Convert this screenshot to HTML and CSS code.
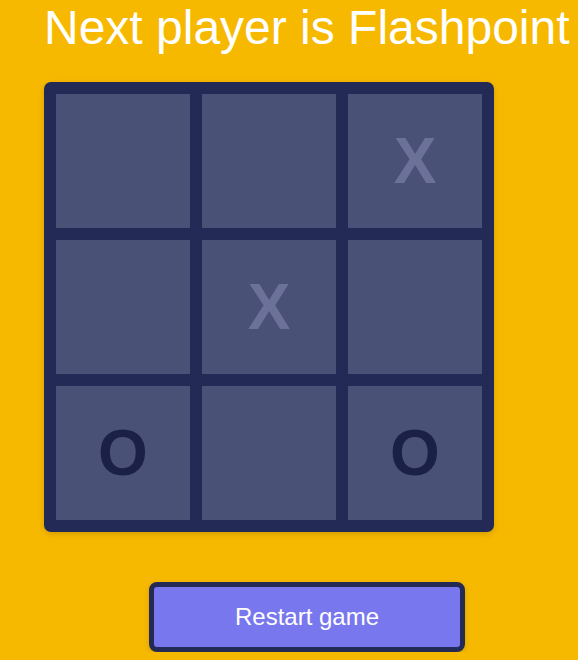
FILE: index.html
```html
<!DOCTYPE html>
<html lang="en">
<head>
<meta charset="utf-8">
<title>Tic Tac Toe</title>
<link rel="stylesheet" href="styles.css">
</head>
<body>
<main class="game">
  <h1 class="status">Next player is Flashpoint</h1>
  <div class="board">
    <button class="cell"></button>
    <button class="cell"></button>
    <button class="cell cell-x">X</button>
    <button class="cell"></button>
    <button class="cell cell-x">X</button>
    <button class="cell"></button>
    <button class="cell cell-o">O</button>
    <button class="cell"></button>
    <button class="cell cell-o">O</button>
  </div>
  <div class="actions">
    <button class="restart">Restart game</button>
  </div>
</main>
</body>
</html>
```
FILE: styles.css
```css
html, body {
  margin: 0;
  padding: 0;
  background: #f7b900;
  font-family: "Liberation Sans", Arial, sans-serif;
}
.game {
  padding-left: 44px;
}
.status {
  margin: 0;
  font-size: 48px;
  font-weight: normal;
  color: #ffffff;
  line-height: 56px;
  white-space: nowrap;
}
.board {
  margin-top: 26px;
  width: 450px;
  height: 450px;
  box-sizing: border-box;
  padding: 12px;
  background: #222a55;
  border-radius: 7px;
  display: grid;
  grid-template-columns: repeat(3, 134px);
  grid-template-rows: repeat(3, 134px);
  gap: 12px;
  box-shadow: 0 2px 6px rgba(0, 0, 0, 0.15);
}
.cell {
  border: none;
  margin: 0;
  padding: 0;
  background: #4a5176;
  font-family: "Liberation Sans", Arial, sans-serif;
  font-weight: bold;
  font-size: 64px;
  line-height: 1;
  display: flex;
  align-items: center;
  justify-content: center;
}
.cell-x {
  color: #6b7199;
}
.cell-o {
  color: #1b2046;
}
.actions {
  margin-top: 50px;
  padding-left: 105px;
}
.restart {
  width: 316px;
  height: 70px;
  box-sizing: border-box;
  border: 5px solid #222a55;
  border-radius: 8px;
  background: #7877ee;
  color: #ffffff;
  font-family: "Liberation Sans", Arial, sans-serif;
  font-size: 24px;
  box-shadow: 0 2px 6px rgba(0, 0, 0, 0.15);
}
```
